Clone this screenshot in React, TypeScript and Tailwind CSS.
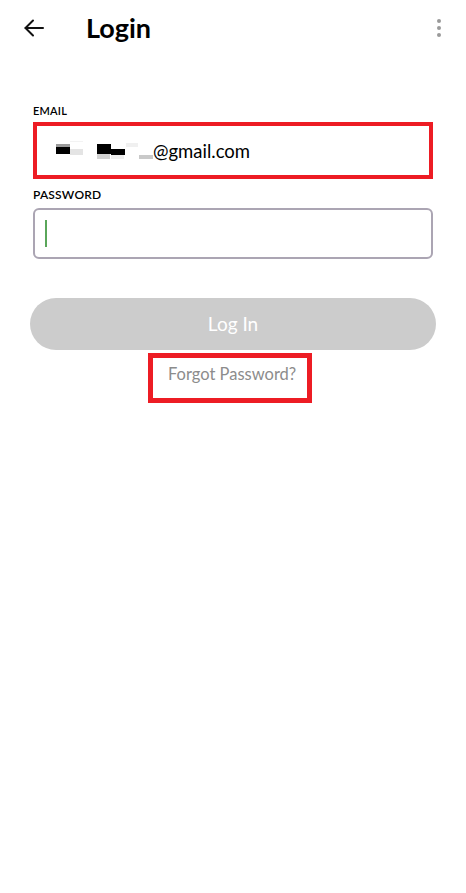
import { useState } from 'react'

export default function App() {
  const [password, setPassword] = useState('')

  return (
    <div className="min-h-screen w-full bg-white font-['Lato','Open_Sans',sans-serif] text-black">
      {/* Top bar */}
      <header className="flex h-[56px] items-center justify-between pl-[24px] pr-[25px]">
        <div className="flex items-center">
          <button aria-label="Back" className="flex items-center">
            <svg width="20" height="18" viewBox="0 0 20 18" fill="none" stroke="#111" strokeWidth="2" strokeLinecap="round" strokeLinejoin="round">
              <path d="M19 9H1.5" />
              <path d="M9 1.5L1.5 9L9 16.5" />
            </svg>
          </button>
          <h1 className="ml-[42px] text-[27px] font-bold leading-[32px]">Login</h1>
        </div>
        <div className="flex flex-col gap-[3px]">
          <span className="h-[4px] w-[4px] rounded-full bg-[#9a9a9a]" />
          <span className="h-[4px] w-[4px] rounded-full bg-[#9a9a9a]" />
          <span className="h-[4px] w-[4px] rounded-full bg-[#9a9a9a]" />
        </div>
      </header>

      <main className="flex flex-col px-[33px] pt-[48px]">
        <label className="text-[11px] font-semibold leading-[14px] tracking-[0.2px]">EMAIL</label>
        <div className="mt-[4px] flex h-[57px] items-center border-4 border-[#ed1c24] pl-[19px]">
          {/* redacted part of the address */}
          <svg width="97" height="20" viewBox="0 0 97 20" className="shrink-0">
            <rect x="0" y="3" width="14" height="3" fill="#9a9a9a" />
            <rect x="0" y="6" width="14" height="7" fill="#000" />
            <rect x="14" y="8" width="13" height="6" fill="#e4e4e4" />
            <rect x="14" y="-2" width="13" height="3" fill="#f3f3f3" />
            <rect x="41" y="3" width="14" height="10" fill="#000" />
            <rect x="55" y="8" width="14" height="6" fill="#000" />
            <rect x="41" y="13" width="13" height="5" fill="#d2d2d2" />
            <rect x="55" y="14" width="13" height="4" fill="#eeeeee" />
            <rect x="70" y="2" width="12" height="4" fill="#f0f0f0" />
            <rect x="83" y="14" width="14" height="4" fill="#c9c9c9" />
          </svg>
          <span className="text-[18.5px] leading-[22px]">@gmail.com</span>
        </div>

        <label className="mt-[9px] text-[12px] font-semibold leading-[14px] tracking-[0.2px]">PASSWORD</label>
        <div className="mt-[6px] flex h-[51px] items-center rounded-[6px] border-2 border-[#aba5b3] pl-[10px]">
          <span className="h-[27px] w-[2px] bg-[#5aa65a]" />
          <input
            type="password"
            value={password}
            onChange={(e) => setPassword(e.target.value)}
            className="h-full flex-1 bg-transparent text-[18px] outline-none"
          />
        </div>

        <button
          disabled
          className="-mx-[3px] mt-[39px] h-[52px] rounded-full bg-[#cccccc] text-[19px] leading-[24px] text-white"
        >
          Log In
        </button>

        <div className="ml-[115px] mt-[3px] h-[50px] w-[164px] border-[5px] border-[#ed1c24] pl-[15px] pt-[4px]">
          <span className="text-[16.5px] leading-[20px] text-[#8c8c8c]">Forgot Password?</span>
        </div>
      </main>
    </div>
  )
}
